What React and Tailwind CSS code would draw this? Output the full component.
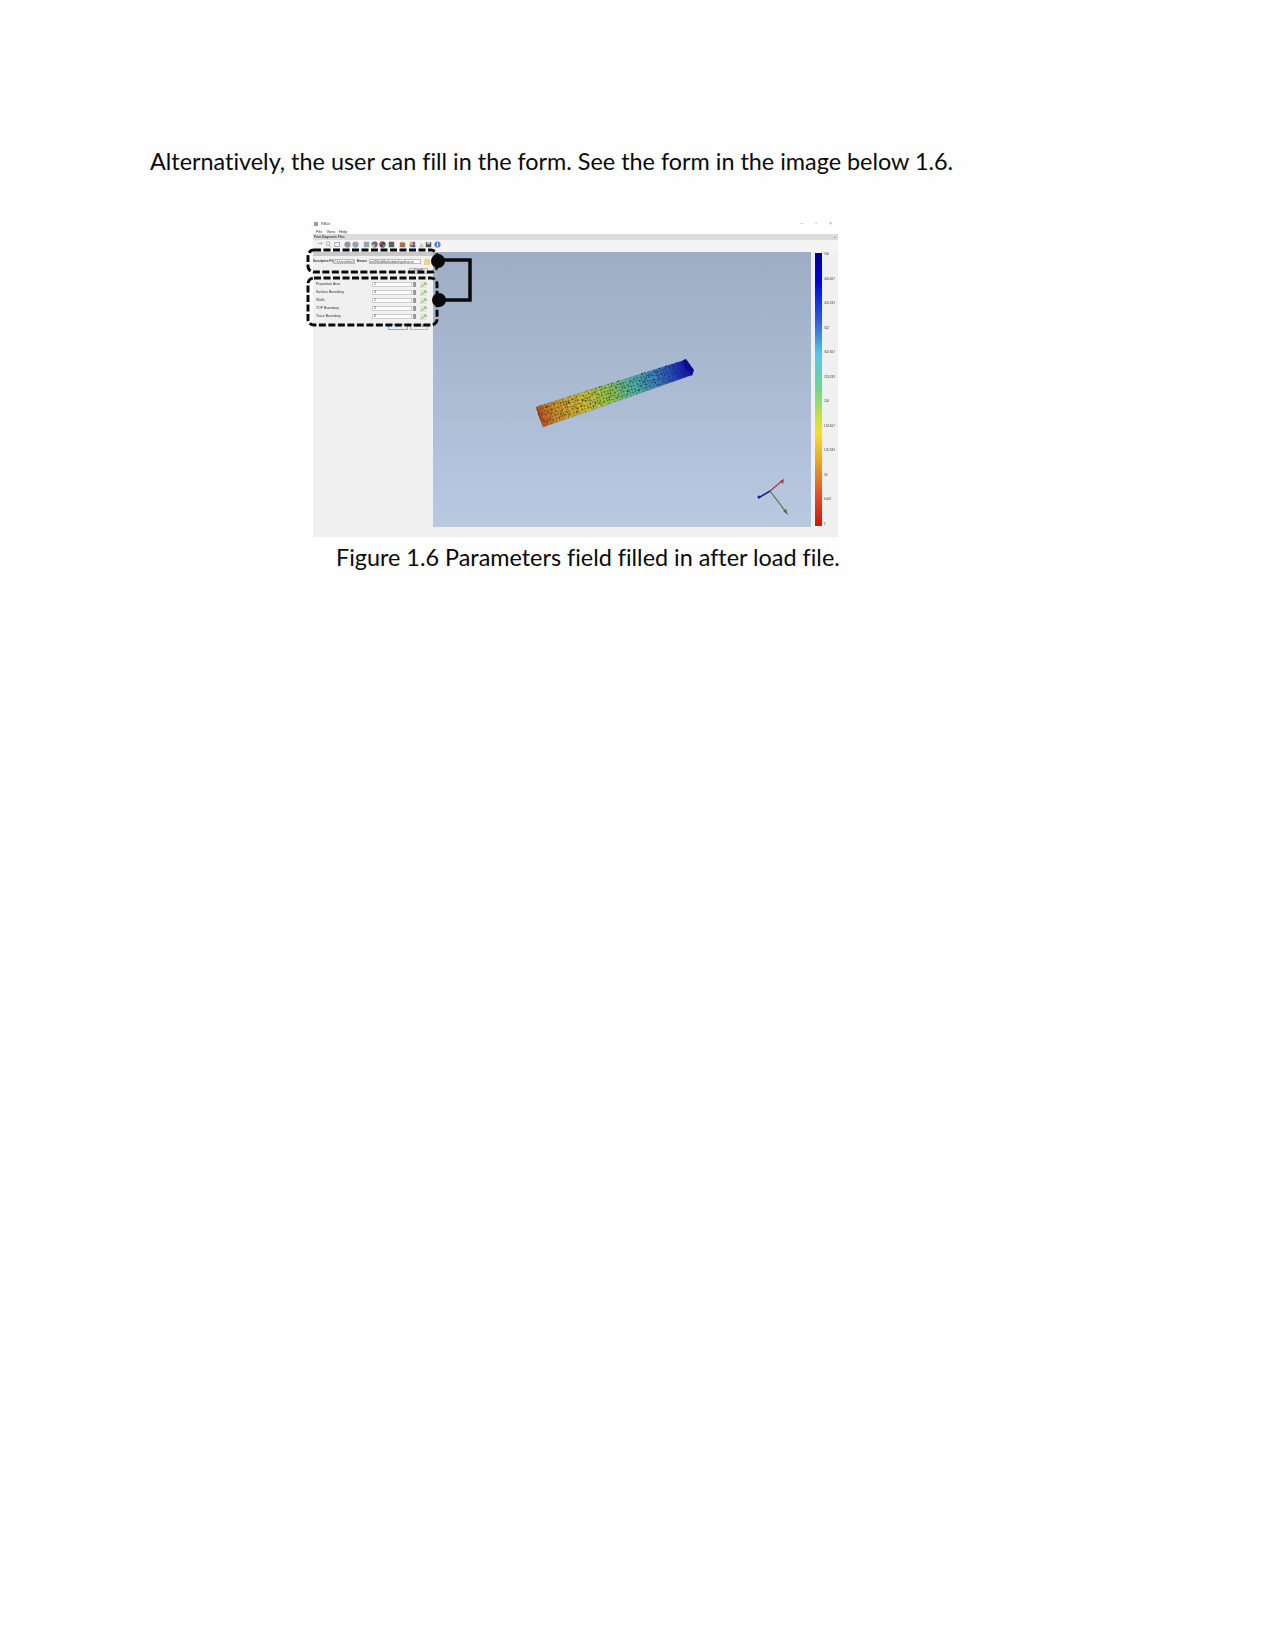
import React from "react";

const rows = [
  ["Proportion Area", "1"],
  ["Surface Boundary", "4"],
  ["Walls", "1"],
  ["TOP Boundary", "5"],
  ["Trace Boundary", "6"],
];
const ticks = ["500", "450.667", "401.333", "352", "302.667", "253.333", "204", "154.667", "105.333", "56", "6.667", "1"];

function Spark() {
  return (
    <svg width="7" height="6" viewBox="0 0 7 6" className="shrink-0">
      <rect width="7" height="6" fill="#dfe6d8" />
      <path d="M1 5L6 1M4 1h2v2" stroke="#8fb56a" strokeWidth="1" fill="none" />
    </svg>
  );
}

const toolbar = [
  <path key="a" d="M1 3h6l-2-2M7 3l-2 2" stroke="#8aa" fill="none" strokeWidth="1" />,
  <g key="b"><circle cx="4" cy="3.500" r="2.500" stroke="#99a" fill="none" /><path d="M6 6l2 2" stroke="#99a" /></g>,
  <rect key="c" x="1" y="2" width="6" height="5" stroke="#99a" fill="none" />,
  <circle key="d" cx="4.500" cy="4.500" r="4" fill="#8d97a8" />,
  <circle key="e" cx="4.500" cy="4.500" r="4" fill="#9aa2b0" />,
  <rect key="f" x="1" y="1" width="7" height="7" fill="#9aa6b4" />,
  <g key="g"><circle cx="4.500" cy="4.500" r="4" fill="#2f7fd0" /><path d="M4.500 .5a4 4 0 0 1 4 4h-4z" fill="#e23a2e" /><path d="M.5 4.500a4 4 0 0 0 4 4v-4z" fill="#f3c92c" /></g>,
  <g key="h"><circle cx="4.500" cy="4.500" r="4" fill="#333a66" /><path d="M.5 4.500a4 4 0 0 1 4-4v4z" fill="#d8452f" /><path d="M4.500 4.500h4a4 4 0 0 1-4 4z" fill="#3aa76a" /></g>,
  <rect key="i" x="1" y="1" width="7" height="7" fill="#5b5f68" />,
  <g key="j"><rect x="1" y="2" width="7" height="6" fill="#a5714a" /><path d="M1 2l3-1.500 4 1.500z" fill="#d09a6a" /></g>,
  <g key="k"><rect x="1" y="1" width="3.500" height="3.500" fill="#e6b422" /><rect x="4.500" y="1" width="3.500" height="3.500" fill="#d8358e" /><rect x="1" y="4.500" width="3.500" height="3.500" fill="#34a853" /><rect x="4.500" y="4.500" width="3.500" height="3.500" fill="#3a46c8" /></g>,
  <path key="l" d="M4.500 2L8 8H1z" fill="#c3d6b4" />,
  <g key="m"><rect x="1" y="1.500" width="7" height="6.500" fill="#4d5560" /><rect x="2.500" y="1.500" width="4" height="2.500" fill="#c8ccd2" /></g>,
  <g key="n"><circle cx="4.500" cy="4.500" r="4" fill="#4a86d8" /><rect x="4" y="2" width="1.200" height="5" fill="#fff" /></g>,
];
// centre-to-centre distance between neighbouring toolbar icons
const toolStep = [0, 8, 9, 10, 8, 11, 8, 8, 9, 11, 10, 9, 7, 9];

function buildMesh() {
  let s = 12345;
  const rnd = () => {
    s = (s * 16807) % 2147483647;
    return s / 2147483647;
  };
  const N = 52;
  const M = 6;
  const pts = [];
  for (let i = 0; i <= N; i++) {
    const row = [];
    for (let j = 0; j <= M; j++) {
      const u = Math.min(1, Math.max(0, (i + (i && i < N ? (rnd() - 0.5) * 0.7 : 0)) / N));
      const v = Math.min(1, Math.max(0, (j + (j && j < M ? (rnd() - 0.5) * 0.7 : 0)) / M));
      const tx = 536 + (685 - 536) * u;
      const ty = 407 + (360 - 407) * u;
      const bx = 543 + (692 - 543) * u;
      const by = 427 + (375 - 427) * u;
      row.push([tx + (bx - tx) * v, ty + (by - ty) * v]);
    }
    pts.push(row);
  }
  let d = "";
  const f = (p) => `${p[0].toFixed(1)} ${p[1].toFixed(1)}`;
  for (let i = 0; i < N; i++) {
    for (let j = 0; j < M; j++) {
      const a = pts[i][j];
      const b = pts[i + 1][j];
      const c = pts[i][j + 1];
      const e = pts[i + 1][j + 1];
      d += (i + j) % 2 ? `M${f(a)}L${f(b)}L${f(e)}L${f(a)}L${f(c)}L${f(e)}` : `M${f(b)}L${f(a)}L${f(c)}L${f(b)}L${f(e)}L${f(c)}`;
    }
  }
  const spots = [];
  for (let k = 0; k < 90; k++) {
    const i = Math.floor(rnd() * N);
    const j = Math.floor(rnd() * M);
    spots.push([pts[i][j][0], pts[i][j][1], 0.4 + rnd() * 0.5]);
  }
  return { d, spots };
}
const mesh = buildMesh();

export default function App() {
  return (
    <div className="w-[1275px] h-[1650px] bg-[#fefefe] text-black font-['Lato','Liberation_Sans',sans-serif] [font-variant-ligatures:none] pt-[147px]">
      <p className="ml-[150px] text-[23.400px] leading-[28px] text-[#0a0a0a] whitespace-nowrap">
        Alternatively, the user can fill in the form. See the form in the image below 1.6.
      </p>

      <figure className="relative ml-[313px] mt-[43px] w-[525px]">
        <div className="flex flex-col h-[319px] bg-[#f0f0f0] blur-[0.45px] overflow-hidden font-['Liberation_Sans',sans-serif]">
          <div className="h-[11px] bg-white flex items-center text-[4px] text-[#444] shrink-0">
            <span className="ml-[1px] w-[4px] h-[4px] bg-[#8d9db4]" />
            <span className="ml-[3px]">RBot</span>
            <div className="ml-auto mr-[6px] flex gap-[12px] text-[5px] text-[#888]">
              <span>–</span><span>▫</span><span>×</span>
            </div>
          </div>
          <div className="h-[5px] bg-white flex items-center gap-[4px] pl-[3px] text-[4px] text-[#333] shrink-0">
            <span>File</span><span>View</span><span>Help</span>
          </div>
          <div className="h-[6px] bg-[#dcdcdc] flex items-center justify-between pl-[1px] pr-[1px] text-[3px] font-bold text-[#444] shrink-0">
            <span>Print Diagnostic Files</span>
            <span className="text-[3px]">▪ ▫</span>
          </div>
          <div className="h-[12px] bg-[#f4f4f4] flex items-start pt-[1px] pl-[3.500px] shrink-0">
            {toolbar.map((icon, i) => (
              <svg key={i} width="7" height="7" viewBox="0 0 9 9" className="shrink-0" style={{ marginLeft: i === 0 ? 0 : toolStep[i] - 7 }}>
                {icon}
              </svg>
            ))}
          </div>

          <div className="flex flex-1 min-h-0">
            <div className="w-[120px] shrink-0 flex flex-col text-[3.500px] text-[#333]">
              <div className="h-[4px] bg-[#c9c9c9] shrink-0" />
              <div className="h-[9px] mt-[1px] flex items-center shrink-0 text-[2.800px]">
                <span className="font-bold w-[20px] whitespace-nowrap">Description File</span>
                <span className="h-[5px] w-[22px] bg-white border-[0.5px] border-[#bbb] whitespace-nowrap">C:/Users/rr/bot3</span>
                <span className="ml-[2px] font-bold">Browse</span>
                <span className="ml-[2px] h-[5px] w-[52px] bg-white border-[0.5px] border-[#bbb] whitespace-nowrap">var/1/Build/bot/sample/input/test.txt</span>
                <span className="ml-[3px] h-[6px] w-[6px] bg-[#e8d98a]" />
              </div>
              <div className="flex justify-end pr-[5px] shrink-0 mt-[2px]">
                <span className="w-[19px] h-[6px] bg-[#e6e6e6] border-[0.5px] border-[#bbb] flex items-center justify-center">Load</span>
              </div>
              <div className="mt-[8px] flex flex-col gap-[3px] shrink-0">
                {rows.map(([label, val]) => (
                  <div key={label} className="h-[5px] flex items-center">
                    <span className="ml-[3px] w-[56px] whitespace-nowrap">{label}</span>
                    <span className="w-[40px] h-[5px] bg-white border-[0.5px] border-[#ccc] pl-[1px] flex items-center">{val}</span>
                    <span className="ml-[1px] w-[3px] h-[5px] bg-[#999]" />
                    <span className="ml-[4px]"><Spark /></span>
                  </div>
                ))}
              </div>
              <div className="mt-[5px] ml-[75px] flex gap-[2px] shrink-0">
                <span className="w-[20px] h-[6px] bg-[#e8eff8] border-[0.5px] border-[#7fb0e0] flex items-center justify-center">OK</span>
                <span className="w-[18px] h-[6px] bg-[#eee] border-[0.5px] border-[#bbb] flex items-center justify-center">Cancel</span>
              </div>
            </div>

            <div className="flex flex-col w-[378px] shrink-0 pb-[10px]">
              <div className="relative flex-1 bg-gradient-to-b from-[#9cadc4] to-[#b9c9e1]">
                <svg className="absolute inset-0 w-full h-full overflow-visible" viewBox="433 252 378 275">
                  <defs>
                    <linearGradient id="beam" gradientUnits="userSpaceOnUse" x1="538" y1="420" x2="690" y2="365">
                      <stop offset="0" stopColor="#d2481f" />
                      <stop offset="0.1" stopColor="#dc9226" />
                      <stop offset="0.3" stopColor="#e0cb32" />
                      <stop offset="0.47" stopColor="#a2d24c" />
                      <stop offset="0.62" stopColor="#55c4b0" />
                      <stop offset="0.78" stopColor="#3f85cc" />
                      <stop offset="0.92" stopColor="#2034c8" />
                      <stop offset="1" stopColor="#0a0ac8" />
                    </linearGradient>
                  </defs>
                  <polygon points="536,407 685,360 693,370 692,375 543,427" fill="url(#beam)" />
                  <path d={mesh.d} fill="none" stroke="#15202c" strokeWidth="0.35" opacity="0.45" />
                  {mesh.spots.map((p, i) => (
                    <circle key={i} cx={p[0]} cy={p[1]} r={p[2]} fill="#10161e" opacity="0.5" />
                  ))}
                  <polygon points="536,407 543,427 539,411" fill="#6e3018" opacity="0.75" />
                  <polygon points="683,360 686,359 694,370 692,376 684,366" fill="#080a90" />
                  <line x1="770" y1="491" x2="782" y2="481" stroke="#a8344a" strokeWidth="1.200" />
                  <polygon points="784,479 780,481 783,484" fill="#a8344a" />
                  <line x1="770" y1="491" x2="760" y2="497" stroke="#16208a" strokeWidth="1.500" />
                  <circle cx="759" cy="497" r="1.500" fill="#16208a" />
                  <line x1="770" y1="491" x2="786" y2="512" stroke="#3f7d3f" strokeWidth="1.200" />
                  <polygon points="788,515 783,511 786,509" fill="#3f7d3f" />
                </svg>
              </div>
            </div>

            <div className="w-[27px] shrink-0 flex pl-[4px] pt-[1px] pb-[11px]">
              <div className="w-[7px] h-full bg-[linear-gradient(to_bottom,#00008c_0%,#0000e0_10%,#2a62d8_25%,#52c8e8_37%,#6fd68f_50%,#c8e040_60%,#f2e030_66%,#e89a28_78%,#dc4a20_90%,#c81a10_100%)]" />
              <div className="ml-[2px] flex flex-col justify-between text-[3px] text-[#444]">
                {ticks.map((t) => (
                  <span key={t} className="leading-[3px] whitespace-nowrap">{t}</span>
                ))}
              </div>
            </div>
          </div>
        </div>

        <svg className="absolute inset-0 w-full h-full overflow-visible pointer-events-none" viewBox="313 218 525 319">
          <rect x="308" y="250" width="129" height="22" rx="6" fill="none" stroke="#0a0a0a" strokeWidth="3" strokeDasharray="7 2.500" />
          <rect x="308" y="278" width="129" height="47" rx="6" fill="none" stroke="#0a0a0a" strokeWidth="3" strokeDasharray="7 2.500" />
          <path d="M438 260H470V300H439" fill="none" stroke="#0a0a0a" strokeWidth="3.500" />
          <circle cx="438" cy="261" r="7" fill="#0a0a0a" />
          <circle cx="439" cy="300" r="7" fill="#0a0a0a" />
        </svg>
      </figure>

      <p className="ml-[336px] mt-[6px] text-[23.400px] leading-[28px] text-[#0a0a0a] whitespace-nowrap">
        Figure 1.6 Parameters field filled in after load file.
      </p>
    </div>
  );
}
